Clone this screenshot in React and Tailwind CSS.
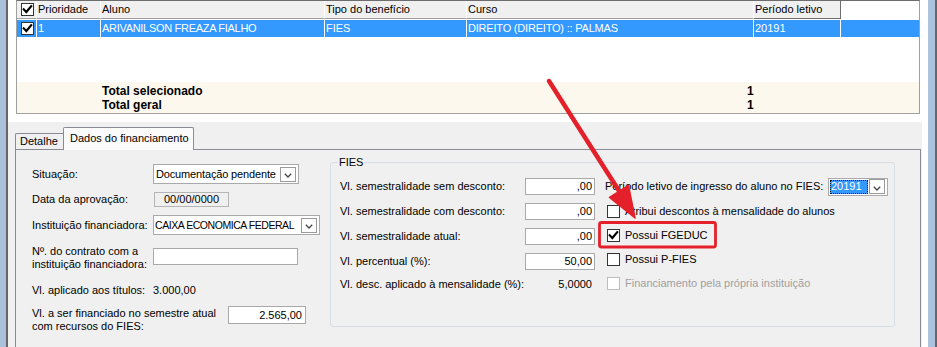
import React from "react";

const Check = () => (
  <svg width="11" height="11" viewBox="0 0 11 11">
    <path d="M1.8 5.4 L4.3 8 L9.2 2.2" fill="none" stroke="#000" strokeWidth="2.2" strokeLinecap="square" />
  </svg>
);

function Checkbox({ checked, disabled }) {
  return (
    <div
      className={
        disabled
          ? "w-[13px] h-[13px] border border-[#bdbdbd] bg-white flex items-center justify-center shrink-0"
          : "w-[13px] h-[13px] border border-[#333333] bg-white flex items-center justify-center shrink-0"
      }
    >
      {checked && <Check />}
    </div>
  );
}

const Chevron = () => (
  <svg width="8" height="5" viewBox="0 0 8 5" className="mt-[3px]">
    <path d="M0.8 0.8 L4 4 L7.2 0.8" fill="none" stroke="#444" strokeWidth="1.3" />
  </svg>
);

function DropButton() {
  return (
    <div className="ml-auto mr-[2px] w-[16px] h-[15px] border border-[#9a9a9a] bg-white flex items-center justify-center shrink-0">
      <Chevron />
    </div>
  );
}

export default function App() {
  return (
    <div className="relative w-[937px] h-[347px] flex overflow-hidden bg-white text-[11px] leading-[13px] text-black font-['Liberation_Sans',Arial,sans-serif]">
      <div className="w-[6px] bg-[#abc2dc] shrink-0" />
      <div className="w-[2px] bg-[#666666] shrink-0" />

      <div className="flex-1 flex flex-col bg-white">
        {/* Grid */}
        <div className="px-2">
          <div className="h-[114px] border border-[#a0a0a0] border-t-[#6d6d6d] flex flex-col bg-white">
            {/* header */}
            <div className="h-[18px] flex shrink-0">
              <div className="w-[20px] h-full bg-[#f0f0f0] border-r border-r-white border-b border-b-[#a0a0a0] flex items-center pl-[4px]">
                <Checkbox checked />
              </div>
              <div className="w-[64px] h-full bg-[#f0f0f0] border-r border-r-white border-b border-b-[#a0a0a0] flex items-center pl-[1px]">Prioridade</div>
              <div className="w-[224px] h-full bg-[#f0f0f0] border-r border-r-white border-b border-b-[#a0a0a0] flex items-center pl-[1px]">Aluno</div>
              <div className="w-[142px] h-full bg-[#f0f0f0] border-r border-r-white border-b border-b-[#a0a0a0] flex items-center pl-[1px]">Tipo do benefício</div>
              <div className="w-[287px] h-full bg-[#f0f0f0] border-r border-r-white border-b border-b-[#a0a0a0] flex items-center pl-[1px]">Curso</div>
              <div className="w-[87px] h-full bg-[#f0f0f0] border-r border-r-[#6d6d6d] border-b border-b-[#6d6d6d] flex items-center pl-[1px]">Período letivo</div>
              <div className="flex-1 h-full bg-white" />
            </div>
            <div className="h-[1px] shrink-0" />
            {/* data row */}
            <div className="h-[17px] flex shrink-0 text-white">
              <div className="w-[20px] h-full bg-[#3399ff] border-r border-r-white flex items-center pl-[4px]">
                <Checkbox checked />
              </div>
              <div className="w-[64px] h-full bg-[#3399ff] border-r border-r-white flex items-center pl-[1px]">1</div>
              <div className="w-[224px] h-full bg-[#3399ff] border-r border-r-white flex items-center pl-[1px] tracking-[-0.3px]">ARIVANILSON FREAZA FIALHO</div>
              <div className="w-[142px] h-full bg-[#3399ff] border-r border-r-white flex items-center pl-[1px]">FIES</div>
              <div className="w-[287px] h-full bg-[#3399ff] border-r border-r-white flex items-center pl-[1px] tracking-[-0.2px]">DIREITO (DIREITO) :: PALMAS</div>
              <div className="w-[87px] h-full bg-[#3399ff] border-r border-r-white flex items-center pl-[1px]">20191</div>
              <div className="flex-1 h-full bg-[#3399ff]" />
            </div>
            <div className="flex-1" />
            {/* footer */}
            <div className="h-[31px] shrink-0 bg-[#fdf8ee] flex pl-[85px] pt-[2px] font-bold text-[12px] leading-[14px]">
              <div className="w-[645px]">
                <div>Total selecionado</div>
                <div>Total geral</div>
              </div>
              <div>
                <div>1</div>
                <div>1</div>
              </div>
            </div>
          </div>
        </div>

        <div className="h-2 shrink-0" />

        {/* Lower area */}
        <div className="flex-1 bg-[#f0f0f0] mr-[6px] flex flex-col pt-[5px]">
          {/* tabs */}
          <div className="h-[22px] flex items-end pl-[7px] shrink-0">
            <div className="h-[16px] w-[48px] border border-b-0 border-r-0 border-[#898c95] bg-[#f0f0f0] flex items-center pl-[4px] rounded-tl-[2px]">
              Detalhe
            </div>
            <div className="relative z-10 h-[23px] -mb-[1px] w-[131px] border border-b-0 border-[#898c95] bg-[#fbfbfb] pl-[6px] pt-[4px] rounded-t-[2px]">
              Dados do financiamento
            </div>
          </div>

          {/* panel */}
          <div className="ml-[7px] w-[906px] flex-1 border border-b-0 border-[#898c95] bg-[#f0f0f0] flex">
            {/* left column */}
            <div className="w-[314px] pl-[16px] flex flex-col shrink-0">
              <div className="mt-[14px] h-[20px] flex items-center">
                <div className="w-[121px]">Situação:</div>
                <div className="w-[146px] h-[20px] border border-[#a9a9a9] bg-white flex items-center pl-[2px]">
                  <span className="whitespace-nowrap tracking-[-0.15px]">Documentação pendente</span>
                  <DropButton />
                </div>
              </div>

              <div className="mt-[8px] h-[15px] flex items-center">
                <div className="w-[122px]">Data da aprovação:</div>
                <div className="w-[75px] h-[15px] border border-[#b5b5b5] bg-[#f0f0f0] flex items-center justify-center">00/00/0000</div>
              </div>

              <div className="mt-[8px] h-[20px] flex items-center">
                <div className="w-[121px] whitespace-nowrap">Instituição financiadora:</div>
                <div className="w-[167px] h-[20px] border border-[#a9a9a9] bg-white flex items-center pl-[1px]">
                  <span className="whitespace-nowrap text-[10.5px] tracking-[-0.45px]">CAIXA ECONOMICA FEDERAL</span>
                  <DropButton />
                </div>
              </div>

              <div className="mt-[10px] flex items-start">
                <div className="w-[121px] whitespace-nowrap">
                  Nº. do contrato com a<br />instituição financiadora:
                </div>
                <div className="mt-[3px] w-[145px] h-[17px] border border-[#a9a9a9] bg-white" />
              </div>

              <div className="mt-[12px] h-[14px] flex items-center">
                <div className="w-[121px]">Vl. aplicado aos títulos:</div>
                <div>3.000,00</div>
              </div>

              <div className="mt-[9px] flex items-start">
                <div className="w-[196px] mt-[1px] whitespace-nowrap">
                  Vl. a ser financiado no semestre atual<br />com recursos do FIES:
                </div>
                <div className="w-[78px] h-[18px] border border-[#a9a9a9] bg-white flex items-center justify-end pr-[3px]">2.565,00</div>
              </div>
            </div>

            {/* FIES group */}
            <div className="relative mt-[12px] w-[565px] h-[165px] border border-[#d5dfe5] rounded-[3px] pt-[11px] pl-[9px] flex flex-col shrink-0">
              <div className="absolute -top-[7px] left-[7px] bg-[#f0f0f0] px-[1px]">FIES</div>

              <div className="h-[25px] flex items-center">
                <div className="w-[185px] whitespace-nowrap">Vl. semestralidade sem desconto:</div>
                <div className="w-[70px] h-[17px] border border-[#a9a9a9] bg-white flex items-center justify-end pr-[2px]">,00</div>
                <div className="ml-[10px] w-[223px] whitespace-nowrap">Período letivo de ingresso do aluno no FIES:</div>
                <div className="w-[60px] h-[18px] border border-[#a9a9a9] bg-white flex items-center pl-[1px]">
                  <div className="w-[38px] h-[14px] bg-[#3399ff] text-white flex items-center pl-[1px] outline outline-1 outline-dotted outline-[#1a1a1a] -outline-offset-1">20191</div>
                  <DropButton />
                </div>
              </div>

              <div className="h-[25px] flex items-center">
                <div className="w-[185px] whitespace-nowrap">Vl. semestralidade com desconto:</div>
                <div className="w-[70px] h-[17px] border border-[#a9a9a9] bg-white flex items-center justify-end pr-[2px]">,00</div>
                <div className="ml-[12px] flex items-center">
                  <Checkbox />
                  <span className="ml-[5px] whitespace-nowrap">Atribui descontos à mensalidade do alunos</span>
                </div>
              </div>

              <div className="h-[25px] flex items-center">
                <div className="w-[185px] whitespace-nowrap">Vl. semestralidade atual:</div>
                <div className="w-[70px] h-[17px] border border-[#a9a9a9] bg-white flex items-center justify-end pr-[2px]">,00</div>
                <div className="ml-[12px] flex items-center -mt-[2px]">
                  <Checkbox checked />
                  <span className="ml-[5px] whitespace-nowrap">Possui FGEDUC</span>
                </div>
              </div>

              <div className="h-[24px] flex items-center">
                <div className="w-[185px] whitespace-nowrap">Vl. percentual (%):</div>
                <div className="w-[70px] h-[17px] border border-[#a9a9a9] bg-white flex items-center justify-end pr-[2px]">50,00</div>
                <div className="ml-[12px] flex items-center -mt-[3px]">
                  <Checkbox />
                  <span className="ml-[5px] whitespace-nowrap">Possui P-FIES</span>
                </div>
              </div>

              <div className="h-[22px] flex items-center">
                <div className="w-[185px] whitespace-nowrap">Vl. desc. aplicado à mensalidade (%):</div>
                <div className="w-[70px] text-right pr-[3px]">5,0000</div>
                <div className="ml-[12px] flex items-center -mt-[1px]">
                  <Checkbox disabled />
                  <span className="ml-[5px] whitespace-nowrap text-[#a0a0a0]">Financiamento pela própria instituição</span>
                </div>
              </div>
            </div>
          </div>
        </div>
      </div>

      <div className="w-[7px] bg-[#abc2dc] shrink-0" />
      <div className="w-[2px] bg-[#666666] shrink-0" />

      {/* annotation overlay */}
      <svg className="absolute inset-0 pointer-events-none" width="937" height="347" viewBox="0 0 937 347">
        <rect x="599.5" y="222.5" width="116" height="24.5" rx="2" fill="none" stroke="#e4202a" strokeWidth="2.8" />
        <line x1="549" y1="81" x2="621" y2="194" stroke="#e4202a" strokeWidth="4.5" strokeLinecap="round" />
        <polygon points="635,218 628.5,185.5 609.5,197.5" fill="#e4202a" stroke="#e4202a" strokeWidth="1.5" strokeLinejoin="round" />
      </svg>
    </div>
  );
}
